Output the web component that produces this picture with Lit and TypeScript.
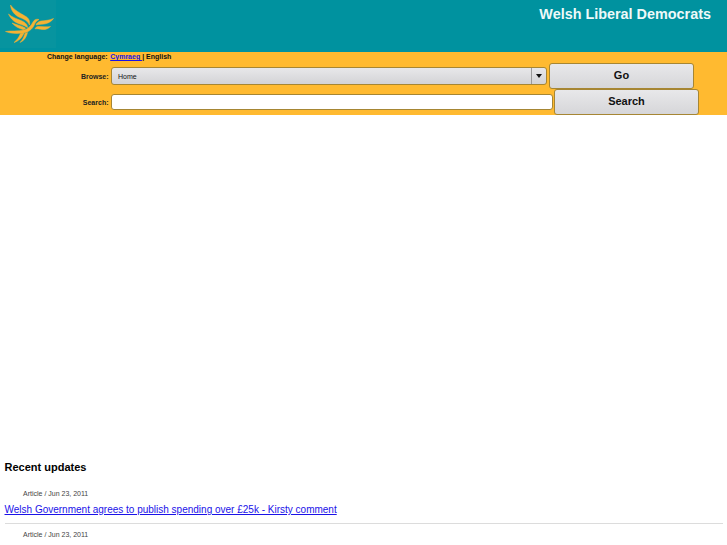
import { LitElement, html, css } from "lit";
import { customElement } from "lit/decorators.js";

@customElement("app-root")
export class AppRoot extends LitElement {
  static styles = css`
    :host { display: block; height: 545px; overflow: hidden; background: #fff; font-family: "Liberation Sans", Arial, sans-serif; color: #000; }
    .top { height: 52px; background: #00929f; display: flex; justify-content: space-between; }
    .logo { width: 56px; height: 48px; background: #07949f; }
    .logo svg { display: block; }
    .title { color: #eef9f9; font-size: 14.4px; font-weight: bold; margin: 6px 16px 0 0; line-height: 16px; }
    .bar { height: 63px; background: #ffba30; display: flex; flex-direction: column; }
    .lang { height: 11px; padding-left: 47px; font-size: 7px; font-weight: bold; line-height: 10px; color: #111; }
    .lang a { color: #1a12e8; margin-left: 0.6px; }
    .row { display: flex; align-items: center; }
    .r1 { height: 26px; }
    .r2 { height: 26px; }
    .label { width: 108.5px; text-align: right; font-size: 7px; font-weight: bold; color: #222; flex: none; }
    .select { margin-left: 2.5px; width: 436px; height: 18px; box-sizing: border-box; border: 1px solid #a68634; border-radius: 3px; background: linear-gradient(#e8e8ea, #d3d3d6); display: flex; align-items: center; font-size: 7px; color: #111; padding-left: 6px; flex: none; }
    .select .v { flex: 1; }
    .arrow { width: 14px; height: 100%; border-left: 1px solid #9a9a9a; display: flex; align-items: center; justify-content: center; }
    .arrow svg { display: block; }
    .input { margin-left: 2.5px; width: 442px; height: 16px; box-sizing: border-box; border: 1px solid #a68634; border-radius: 3px; background: #fff; flex: none; }
    .btn { height: 26px; box-sizing: border-box; border: 1px solid #a68634; border-radius: 3px; background: linear-gradient(#e8e8ea, #d6d6d9); font-size: 11px; font-weight: bold; color: #111; display: flex; align-items: center; justify-content: center; flex: none; padding-bottom: 2px; }
    .go { width: 145px; margin-left: 2px; }
    .search { width: 145px; margin-left: 1px; }
    .main { padding: 345px 4px 0 4.5px; }
    h2 { margin: 0; font-size: 11px; line-height: 14px; font-weight: bold; }
    .meta { font-size: 7px; line-height: 10px; color: #444; padding-left: 18.5px; }
    .m1 { margin-top: 15px; }
    .link { display: block; font-size: 10px; line-height: 14px; color: #1a12e8; margin-top: 4px; }
    .rule { height: 1px; background: #dcdcdc; margin: 6px 0 6px; }
  `;

  render() {
    return html`
      <div class="top">
        <div class="logo">
          <svg width="56" height="48" viewBox="0 0 56 48" fill="#f6b233" stroke="#f6b233" stroke-width="0.5" stroke-linejoin="round">
            <path d="M10.5 5 C14 10 20 13 25 16 C29 18 30 21 29.5 25 C28 21 24 19 20 17.5 C15 15.5 11 11 10.5 5Z"/>
            <path d="M8.5 14 C12 17.5 18 19 23 21.5 C26 23 27.5 25 27.5 27.5 C24 25 20 24.5 16 22.5 C12.5 20.5 10 17.5 8.5 14Z"/>
            <path d="M12 23 C16 24.5 21 25.5 25.5 28 C25 29 24 29.5 23 29.5 C19 28.5 15 26.5 12 23Z"/>
            <path d="M39 19.5 C36 18.5 34 20 33 22 C31 26 28 29 24 30 C18 31.5 11 30.5 5.5 31.5 C10 33.5 17 34 23 33 C28 32.5 32 29.5 34 25.5 C35 23 36 21 39 19.5Z"/>
            <path d="M53.5 18.5 C49 20.5 45 20.5 41 21 C38.5 21.5 36.5 23 36 25 C40 24 43.5 24.5 46.5 23.5 C49.5 22.5 52 21 53.5 18.5Z"/>
            <path d="M50.5 26.5 C46 27.5 42 26 38 26.5 C36.5 26.8 35.5 27.5 35 28.8 C39 28.3 42 30 45 29.5 C47 29.2 49 28 50.5 26.5Z"/>
            <path d="M14 42.5 C18 41.5 22 38 24 33 L20.5 33.5 C19 37 17 40 14 42.5Z"/>
            <path d="M20 42.5 C24 41 26.5 37 27.5 32.5 L25 33.5 C24 37 22.5 40 20 42.5Z"/>
          </svg>
        </div>
        <div class="title">Welsh Liberal Democrats</div>
      </div>
      <div class="bar">
        <div class="lang">Change language: <a href="#">Cymraeg </a> | English</div>
        <div class="row r1">
          <div class="label">Browse:</div>
          <div class="select"><span class="v">Home</span><span class="arrow"><svg width="6" height="4"><path d="M0 0H6L3 4Z" fill="#111"/></svg></span></div>
          <div class="btn go">Go</div>
        </div>
        <div class="row r2">
          <div class="label">Search:</div>
          <div class="input"></div>
          <div class="btn search">Search</div>
        </div>
      </div>
      <div class="main">
        <h2>Recent updates</h2>
        <div class="meta m1">Article / Jun 23, 2011</div>
        <a class="link" href="#">Welsh Government agrees to publish spending over £25k - Kirsty comment</a>
        <div class="rule"></div>
        <div class="meta">Article / Jun 23, 2011</div>
      </div>
    `;
  }
}
